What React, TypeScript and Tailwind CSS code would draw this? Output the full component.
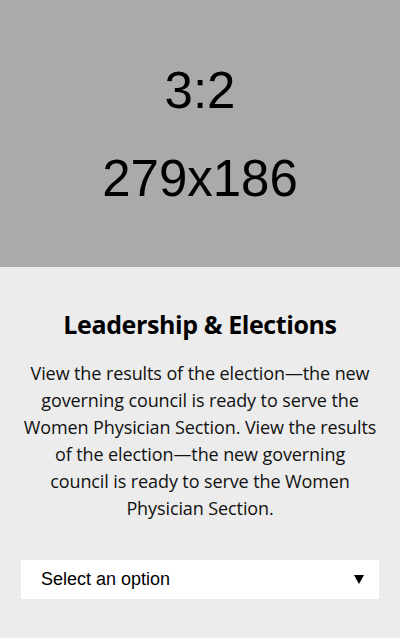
export default function App() {
  return (
    <div className="w-[400px] h-[638px] bg-[#ececec] overflow-hidden">
      <div className="h-[267px] bg-[#aaaaaa] flex flex-col items-center justify-center gap-[33px] font-['Liberation_Sans',Arial,sans-serif] text-black text-[51px] leading-[55px]">
        <div className="mt-[1px]">3:2</div>
        <div>279x186</div>
      </div>
      <div className="px-[20px] pt-[41px] flex flex-col items-center">
        <h2 className="font-['Open_Sans',sans-serif] font-bold text-[25px] leading-[32px] text-black text-center tracking-[-0.4px]">
          Leadership &amp; Elections
        </h2>
        <p className="mt-[20px] font-['Open_Sans',sans-serif] text-[18px] leading-[27px] text-[#111] text-center tracking-[-0.1px]">
          View the results of the election—the new governing council is ready to serve the Women Physician Section. View the results of the election—the new governing
          <br />
          council is ready to serve the Women Physician Section.
        </p>
        <div className="mt-[38px] w-[358px] h-[39px] bg-white flex items-center justify-between pl-[20px] pr-[15px] font-['Liberation_Sans',Arial,sans-serif] text-[18px] text-black">
          <span>Select an option</span>
          <svg width="10" height="9" viewBox="0 0 10 9"><path d="M0 0 H10 L5 9 Z" fill="#000" /></svg>
        </div>
      </div>
    </div>
  );
}
